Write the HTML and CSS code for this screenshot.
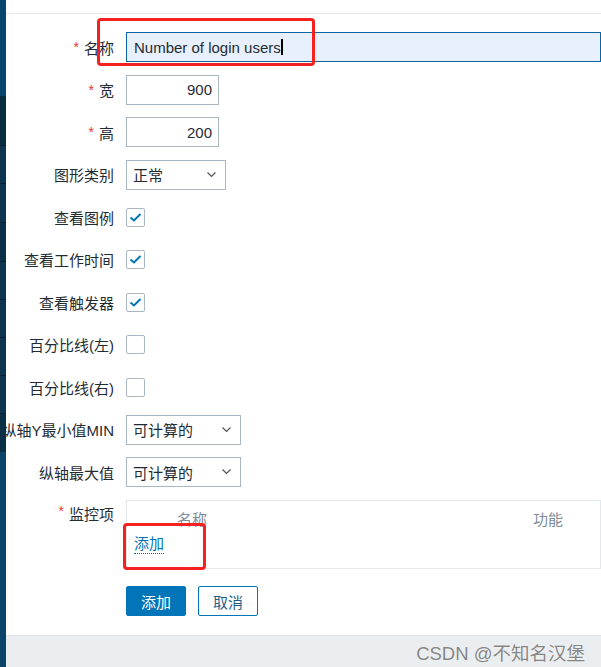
FILE: index.html
```html
<!DOCTYPE html>
<html lang="zh-CN">
<head>
  <meta charset="UTF-8">
  <title>图形</title>
  <link rel="stylesheet" href="styles.css">
</head>
<body>
  <div class="sidebar">
    <div class="seg seg-top"></div>
    <div class="seg seg-dark"></div>
    <div class="seg seg-a"></div>
    <div class="seg seg-b"></div>
    <div class="seg seg-dark2"></div>
    <div class="seg seg-c"></div>
    <div class="seg seg-c"></div>
    <div class="seg seg-c"></div>
    <div class="seg seg-c"></div>
    <div class="seg seg-dark3"></div>
    <div class="seg seg-bottom"></div>
  </div>

  <div class="main">
    <div class="topbar"></div>

    <form class="form">
      <div class="label"><span class="req">*</span>名称</div>
      <div class="field">
        <div class="input input-name">Number of login users<span class="caret"></span></div>
      </div>

      <div class="label"><span class="req">*</span>宽</div>
      <div class="field"><div class="input input-num">900</div></div>

      <div class="label"><span class="req">*</span>高</div>
      <div class="field"><div class="input input-num">200</div></div>

      <div class="label">图形类别</div>
      <div class="field">
        <div class="select select-type">正常
          <svg class="chev" width="9" height="6" viewBox="0 0 9 6"><path d="M0.5 0.5 L4.5 4.5 L8.5 0.5" fill="none" stroke="#555" stroke-width="1.2"/></svg>
        </div>
      </div>

      <div class="label">查看图例</div>
      <div class="field"><span class="check on"><svg width="17" height="17" viewBox="0 0 17 17"><path d="M3.5 8.5 L7 11.5 L13.5 5" fill="none" stroke="#0275b8" stroke-width="2"/></svg></span></div>

      <div class="label">查看工作时间</div>
      <div class="field"><span class="check on"><svg width="17" height="17" viewBox="0 0 17 17"><path d="M3.5 8.5 L7 11.5 L13.5 5" fill="none" stroke="#0275b8" stroke-width="2"/></svg></span></div>

      <div class="label">查看触发器</div>
      <div class="field"><span class="check on"><svg width="17" height="17" viewBox="0 0 17 17"><path d="M3.5 8.5 L7 11.5 L13.5 5" fill="none" stroke="#0275b8" stroke-width="2"/></svg></span></div>

      <div class="label">百分比线(左)</div>
      <div class="field"><span class="check"></span></div>

      <div class="label">百分比线(右)</div>
      <div class="field"><span class="check"></span></div>

      <div class="label">纵轴Y最小值MIN</div>
      <div class="field">
        <div class="select select-calc">可计算的
          <svg class="chev" width="9" height="6" viewBox="0 0 9 6"><path d="M0.5 0.5 L4.5 4.5 L8.5 0.5" fill="none" stroke="#555" stroke-width="1.2"/></svg>
        </div>
      </div>

      <div class="label">纵轴最大值</div>
      <div class="field">
        <div class="select select-calc">可计算的
          <svg class="chev" width="9" height="6" viewBox="0 0 9 6"><path d="M0.5 0.5 L4.5 4.5 L8.5 0.5" fill="none" stroke="#555" stroke-width="1.2"/></svg>
        </div>
      </div>

      <div class="label label-top"><span class="req">*</span>监控项</div>
      <div class="field field-top">
        <div class="items">
          <div class="items-head">
            <span class="col-name">名称</span>
            <span class="col-func">功能</span>
          </div>
          <a href="#" class="link">添加</a>
        </div>
      </div>

      <div class="label"></div>
      <div class="field buttons">
        <button type="button" class="btn btn-primary">添加</button>
        <button type="button" class="btn btn-alt">取消</button>
      </div>
    </form>

    <footer class="footer">
      <span class="watermark">CSDN @不知名汉堡</span>
    </footer>

    <div class="mark mark-name"></div>
    <div class="mark mark-add"></div>
  </div>
</body>
</html>
```

FILE: styles.css
```css
body {
  margin: 0;
  padding: 0;
  display: flex;
  height: 667px;
  overflow: hidden;
  font-family: 'Liberation Sans', 'Noto Sans CJK SC', sans-serif;
  font-size: 15px;
  color: #1f2c33;
  background-color: #fff;
}

/* barre latérale */
.sidebar {
  width: 6px;
  flex-shrink: 0;
  display: flex;
  flex-direction: column;
  position: relative;
  z-index: 2;
}

.seg {
  border-bottom: 1px solid #0a2233;
  background-color: #0e3550;
}

.seg-top { height: 96px; background-color: #0a466b; border-bottom: none; }
.seg-dark { height: 49px; background-color: #0a2c40; }
.seg-a { height: 37px; }
.seg-b { height: 38px; }
.seg-dark2 { height: 38px; background-color: #0b2f47; }
.seg-c { height: 37px; }
.seg-dark3 { height: 38px; background-color: #0b2e45; border-bottom: none; }
.seg-bottom { flex: 1; background-color: #0a4468; border-bottom: none; }

.main {
  flex: 1;
  position: relative;
  overflow: hidden;
  display: flex;
  flex-direction: column;
}

.topbar {
  height: 13px;
  border-bottom: 1px solid #e6e8ea;
}

.form {
  display: grid;
  grid-template-columns: 108px 1fr;
  column-gap: 12px;
  row-gap: 12.5px;
  padding-top: 18px;
  flex: 1;
  align-content: start;
}

.label {
  height: 30px;
  display: flex;
  justify-content: flex-end;
  align-items: center;
  white-space: nowrap;
}

.req {
  color: #e33734;
  margin-right: 5px;
  font-size: 14px;
}

.field {
  display: flex;
  align-items: center;
  min-height: 30px;
}

.field-top {
  align-items: flex-start;
}

.label-top {
  align-items: flex-start;
  padding-top: 3px;
}

.input {
  box-sizing: border-box;
  height: 30px;
  border: 1px solid #a9b7c2;
  padding: 0 7px;
  display: flex;
  align-items: center;
  background-color: #fff;
}

.input-name {
  width: calc(100% + 20px);
  background-color: #e8f0fd;
  border-color: #0a65a0;
}

.caret {
  display: inline-block;
  width: 2px;
  height: 16px;
  background-color: #000;
}

.input-num {
  width: 93px;
  justify-content: flex-end;
  padding-right: 6px;
}

.select {
  box-sizing: border-box;
  height: 30px;
  border: 1px solid #a9b7c2;
  padding: 0 7px 0 6px;
  display: flex;
  align-items: center;
  justify-content: space-between;
}

.select-type { width: 100px; }
.select-calc { width: 115px; }

.chev {
  margin-right: 2px;
}

.check {
  box-sizing: border-box;
  width: 19px;
  height: 19px;
  border: 1px solid #a9b7c2;
  border-radius: 2px;
  display: flex;
  align-items: center;
  justify-content: center;
}

.items {
  box-sizing: border-box;
  width: calc(100% + 20px);
  height: 69px;
  border: 1px solid #e5e8eb;
  padding: 7px 7px 0;
}

.items-head {
  display: flex;
  color: #7d8b96;
  height: 22px;
  align-items: center;
}

.col-name {
  margin-left: 43px;
}

.col-func {
  margin-left: 326px;
}

.link {
  display: inline-block;
  margin-top: 5px;
  color: #0275b8;
  text-decoration: none;
  border-bottom: 1px dotted #0275b8;
  line-height: 18px;
}

.buttons {
  gap: 12px;
  margin-top: 5px;
}

.btn {
  box-sizing: border-box;
  width: 60px;
  height: 30px;
  border-radius: 2px;
  font-family: inherit;
  font-size: 15px;
  cursor: pointer;
  padding: 0;
}

.btn-primary {
  background-color: #0275b8;
  border: 1px solid #0275b8;
  color: #fff;
}

.btn-alt {
  background-color: #fff;
  border: 1px solid #0275b8;
  color: #1f5f8b;
}

.footer {
  height: 31px;
  background-color: #ebeef0;
  border-top: 1px solid #e1e4e7;
  display: flex;
  justify-content: flex-end;
  align-items: center;
  padding-right: 16px;
}

.watermark {
  color: #858585;
  font-size: 18.5px;
  text-shadow: 0 0 1px #fff;
}

/* annotations */
.mark {
  position: absolute;
  box-sizing: border-box;
  border: 3px solid #f52020;
  border-radius: 4px;
}

.mark-name {
  left: 91px;
  top: 18px;
  width: 218px;
  height: 48px;
}

.mark-add {
  left: 117px;
  top: 523px;
  width: 83px;
  height: 47px;
}
```
